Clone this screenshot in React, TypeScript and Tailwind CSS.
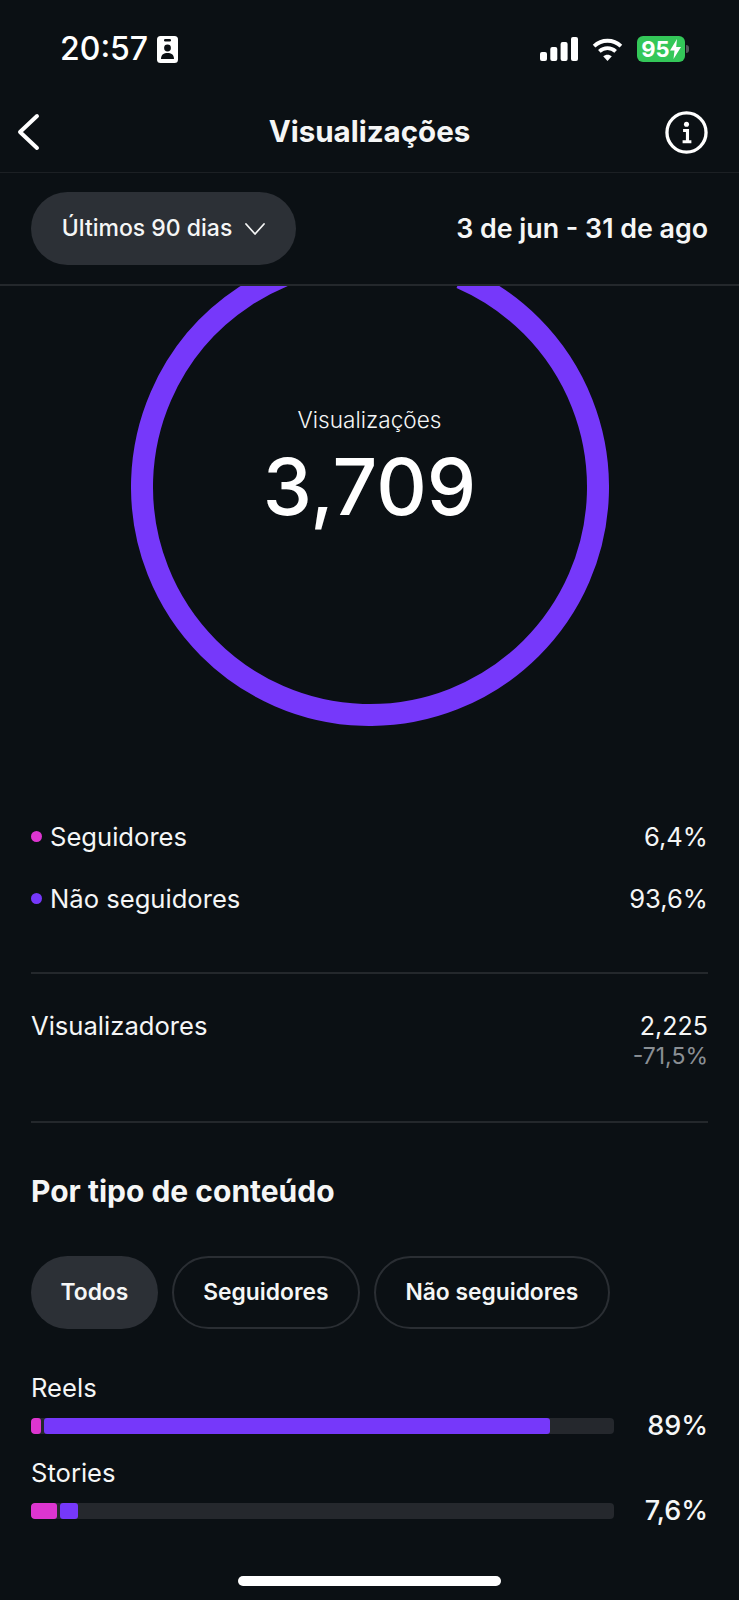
const font = "font-['Inter',sans-serif]";

const Battery = () => (
  <div className="flex items-center gap-[1px]">
    <div className="flex h-[26px] w-[48px] items-center justify-center rounded-[6px] bg-[#34c759] text-[22px] font-bold leading-none text-white">
      95
      <svg width="11" height="20" viewBox="0 0 11 20" fill="white">
        <path d="M7 0 L0 11.5 H4.5 L3.5 20 L11 8 H6.2 Z" />
      </svg>
    </div>
    <div className="h-[8px] w-[3px] rounded-r-full bg-[#55585c]" />
  </div>
);

const StatusBar = () => (
  <div className="flex h-[100px] items-start justify-between pl-[60px] pr-[50px] pt-[33px]">
    <div className="flex items-center gap-[9px]">
      <span className="text-[32px] font-medium leading-[32px] text-white">20:57</span>
      <svg width="21" height="27" viewBox="0 0 21 27">
        <rect width="21" height="27" rx="3.5" fill="white" />
        <rect x="7" y="3" width="7" height="2.4" rx="1.2" fill="#0b1014" />
        <circle cx="10.5" cy="12" r="3.4" fill="#0b1014" />
        <path d="M4 23 C4 18.5 7 17 10.5 17 C14 17 17 18.5 17 23 Z" fill="#0b1014" />
      </svg>
    </div>
    <div className="flex items-center gap-[14px] pt-[3px]">
      <svg width="38" height="24" viewBox="0 0 38 24" fill="white">
        <rect x="0" y="15" width="7" height="9" rx="2" />
        <rect x="10.3" y="10" width="7" height="14" rx="2" />
        <rect x="20.6" y="5" width="7" height="19" rx="2" />
        <rect x="31" y="0" width="7" height="24" rx="2" />
      </svg>
      <svg width="31" height="23" viewBox="0 0 32 24" fill="none" stroke="white" strokeWidth="4">
        <path d="M2 8.5 C10 1 22 1 30 8.5" />
        <path d="M7.5 14 C12.5 9.5 19.5 9.5 24.5 14" />
        <path d="M16 24 L11.5 19 C14 16.8 18 16.8 20.5 19 Z" fill="white" stroke="none" />
      </svg>
      <Battery />
    </div>
  </div>
);

const Header = () => (
  <div className="grid h-[73px] grid-cols-[1fr_auto_1fr] items-center border-b border-[#1c2024] px-[17px] pb-[8px]">
    <svg width="24" height="38" viewBox="0 0 24 38" fill="none" stroke="white" strokeWidth="4" strokeLinecap="round" strokeLinejoin="round">
      <path d="M20 3 L3 19 L20 35" />
    </svg>
    <span className="text-[29.5px] font-bold leading-none text-[#f5f6f6]">Visualizações</span>
    <svg className="mr-[14px] justify-self-end" width="43" height="43" viewBox="0 0 44 44" fill="none" stroke="white">
      <circle cx="22" cy="22" r="20" strokeWidth="3.4" />
      <circle cx="22" cy="13.5" r="2.6" fill="white" stroke="none" />
      <path d="M18.5 20 H23 V31 M18 31.5 H27" strokeWidth="3.2" />
    </svg>
  </div>
);

const Filter = () => (
  <div className="flex h-[113px] items-center justify-between border-b-2 border-[#24282c] px-[31px]">
    <div className="flex h-[73px] w-[265px] items-center justify-center gap-[13px] rounded-full bg-[#2c3036] text-[23px] font-medium text-[#f5f6f6]">
      Últimos 90 dias
      <svg width="20" height="12" viewBox="0 0 20 12" fill="none" stroke="#f5f6f6" strokeWidth="1.8" strokeLinecap="round" strokeLinejoin="round">
        <path d="M1 1 L10 11 L19 1" />
      </svg>
    </div>
    <span className="text-[26.8px] font-semibold text-[#f5f6f6]">3 de jun - 31 de ago</span>
  </div>
);

const Ring = () => (
  <div className="relative h-[441px] overflow-hidden">
    <div className="-mt-[38px] flex justify-center">
      <svg width="478" height="478" viewBox="0 0 478 478" fill="none">
        <circle
          cx="239"
          cy="239"
          r="228"
          stroke="#7638fa"
          strokeWidth="22"
          pathLength={360}
          strokeDasharray="336.5 360"
          transform="rotate(-66.5 239 239)"
        />
      </svg>
    </div>
    <div className="absolute inset-x-0 top-[118px] flex flex-col items-center text-[#f5f6f6]">
      <span className="text-[22.6px] font-light leading-[32px]">Visualizações</span>
      <span className="mt-[9px] text-[78.5px] font-medium leading-[84px] text-white">3,709</span>
    </div>
  </div>
);

const Legend = ({ color, label, value }: { color: string; label: string; value: string }) => (
  <div className="flex h-[62px] items-center justify-between text-[25.6px] text-[#f5f6f6]">
    <div className="flex items-center gap-[8px]">
      <span className={`h-[11px] w-[11px] rounded-full ${color}`} />
      {label}
    </div>
    <span>{value}</span>
  </div>
);

const Pill = ({ label, active }: { label: string; active?: boolean }) => (
  <div
    className={
      active
        ? "flex h-[73px] items-center rounded-full bg-[#2c3036] px-[29.5px] text-[22.8px] font-semibold text-[#f5f6f6]"
        : "flex h-[73px] items-center rounded-full border-2 border-[#2a2e33] px-[29.5px] text-[22.8px] font-semibold text-[#f5f6f6]"
    }
  >
    {label}
  </div>
);

const Bar = ({ label, value, pink, purple }: { label: string; value: string; pink: string; purple: string }) => (
  <div className="flex flex-col">
    <span className="text-[25.6px] leading-[30px] text-[#f5f6f6]">{label}</span>
    <div className="mt-[7px] flex h-[32px] items-center justify-between">
      <div className="flex h-[16px] w-[583px] gap-[3px] overflow-hidden rounded-[4px] bg-[#25282d]">
        <div className={`h-full rounded-[3px] bg-[#dd35d0] ${pink}`} />
        <div className={`h-full rounded-[3px] bg-[#7638fa] ${purple}`} />
      </div>
      <span className="text-[27px] font-medium text-[#f5f6f6]">{value}</span>
    </div>
  </div>
);

export default function App() {
  return (
    <div className={`h-[1600px] w-[739px] overflow-hidden bg-[#0b1014] ${font}`}>
      <StatusBar />
      <Header />
      <Filter />
      <Ring />
      <div className="mt-[79px] px-[31px]">
        <Legend color="bg-[#dd35d0]" label="Seguidores" value="6,4%" />
        <Legend color="bg-[#7638fa]" label="Não seguidores" value="93,6%" />
      </div>
      <div className="mx-[31px] mt-[42px] flex h-[151px] justify-between border-y-2 border-[#24282c] pt-[37px]">
        <span className="text-[25.6px] leading-[30px] text-[#f5f6f6]">Visualizadores</span>
        <div className="flex flex-col items-end">
          <span className="text-[25px] leading-[30px] text-[#f5f6f6]">2,225</span>
          <span className="mt-[2px] text-[23px] leading-[26px] text-[#8a8f94]">-71,5%</span>
        </div>
      </div>
      <div className="px-[31px]">
        <h2 className="mt-[51px] text-[30px] font-bold leading-[34px] text-[#f5f6f6]">Por tipo de conteúdo</h2>
        <div className="mt-[48px] flex gap-[14px]">
          <Pill label="Todos" active />
          <Pill label="Seguidores" />
          <Pill label="Não seguidores" />
        </div>
        <div className="mt-[44px] flex flex-col gap-[16px]">
          <Bar label="Reels" value="89%" pink="w-[10px]" purple="w-[506px]" />
          <Bar label="Stories" value="7,6%" pink="w-[26px]" purple="w-[18px]" />
        </div>
      </div>
      <div className="mt-[49px] flex justify-center">
        <div className="h-[10px] w-[263px] rounded-full bg-white" />
      </div>
    </div>
  );
}
